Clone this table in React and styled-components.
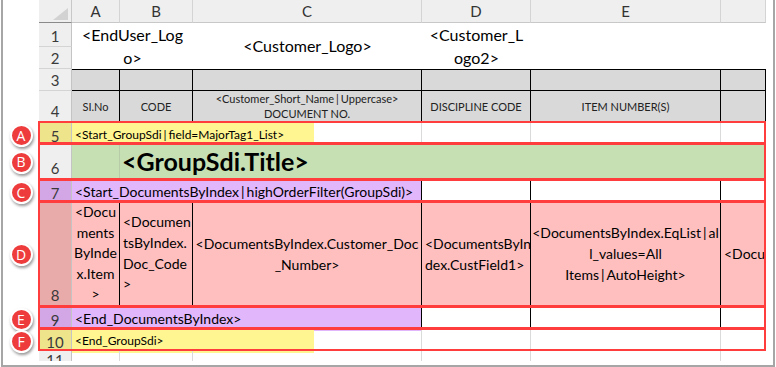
import React from "react";
import styled, { createGlobalStyle, css } from "styled-components";

const GlobalStyle = createGlobalStyle`
  html, body {
    margin: 0;
    padding: 0;
    background: #fff;
  }
  body {
    font-family: Lato, "Liberation Sans", sans-serif;
    color: #000;
  }
`;

const COLS = "36px 33px 48px 73px 229px 109px 190px 45px 7px";
const LIGHT = "#dadada";
const BLACK = "#000";
const GRAY = "#d9d9d9";
const HEAD = "#efefef";
const YELLOW = "#fff591";
const YELLOW_HEAD = "#eee48c";
const PURPLE = "#e2b6fb";
const PURPLE_HEAD = "#d3a7e6";
const PINK = "#ffbfbf";
const PINK_HEAD = "#e9aaaa";
const GREEN = "#c6e0b4";

const Frame = styled.div`
  position: relative;
  box-sizing: border-box;
  width: 774px;
  height: 367px;
  margin-left: 1px;
  border: 2px solid #a6a6a6;
  border-top: none;
  background: #fff;
  overflow: hidden;
`;

const Sheet = styled.div`
  height: 361px;
  overflow: hidden;
`;

const Row = styled.div`
  position: relative;
  display: grid;
  grid-template-columns: ${COLS};
  height: ${(p) => p.$h}px;
  ${(p) =>
    p.$boxed &&
    css`
      &::after {
        content: "";
        position: absolute;
        left: 35px;
        right: 7px;
        top: -1px;
        bottom: -2px;
        border: 2px solid #ff3d3d;
        pointer-events: none;
        z-index: 2;
      }
    `}
`;

const Gutter = styled.div`
  display: flex;
  align-items: center;
  justify-content: center;
  padding-top: 2px;
`;

const Badge = styled.div`
  box-sizing: border-box;
  width: 23px;
  height: 23px;
  border-radius: 50%;
  background: #ee3c3c;
  border: 2px solid #fff;
  box-shadow: 1px 2px 3px rgba(0, 0, 0, 0.4);
  color: #fff;
  font-family: "Open Sans", "Liberation Sans", sans-serif;
  font-size: 14px;
  line-height: 1;
  display: flex;
  align-items: center;
  justify-content: center;
`;

const Corner = styled.div`
  background: ${HEAD};
  border-right: 1px solid #c8c8c8;
  border-bottom: 1px solid #8a8a8a;
  display: flex;
  align-items: flex-end;
  justify-content: flex-end;
  padding: 0 3px 2px 0;
`;

const ColHead = styled.div`
  box-sizing: border-box;
  background: ${HEAD};
  border-right: 1px solid #d4d4d4;
  border-bottom: 1px solid #c8c8c8;
  color: #333;
  font-size: 15px;
  display: flex;
  align-items: center;
  justify-content: center;
`;

const HeadStack = styled.div`
  display: flex;
  flex-direction: column;
`;

const RowHead = styled.div`
  box-sizing: border-box;
  height: ${(p) => (p.$h ? `${p.$h}px` : "auto")};
  background: ${(p) => p.$bg || HEAD};
  border-right: 1px solid #c4c4c4;
  border-bottom: 1px solid #d4d4d4;
  color: #3a3a3a;
  font-size: 15px;
  line-height: 18px;
  display: flex;
  align-items: flex-end;
  justify-content: center;
  padding-bottom: 1px;
`;

const Cell = styled.div`
  box-sizing: border-box;
  grid-column: span ${(p) => p.$span || 1};
  min-width: 0;
  background: ${(p) => p.$bg || "transparent"};
  border-right: ${(p) => (p.$line ? `1px solid ${p.$line}` : "none")};
  border-top: ${(p) => (p.$top ? `1px solid ${p.$top}` : "none")};
  border-bottom: ${(p) => (p.$bottom ? `1px solid ${p.$bottom}` : "none")};
  display: flex;
  align-items: center;
  justify-content: ${(p) => (p.$center ? "center" : "flex-start")};
  text-align: ${(p) => (p.$center ? "center" : "left")};
  font-size: ${(p) => p.$size || 14}px;
  line-height: ${(p) => p.$lh || 20}px;
  white-space: nowrap;
  padding: 0 ${(p) => (p.$pad ?? 3)}px;
  overflow: ${(p) => (p.$clip ? "hidden" : "visible")};
`;

const Fill = styled.div`
  width: ${(p) => p.$w}px;
  height: 100%;
  background: ${(p) => p.$bg};
  display: flex;
  align-items: center;
  padding-left: 3px;
  font-size: 12px;
`;

const Text = styled.span`
  display: block;
`;

const Title = styled.span`
  font-size: 25px;
  font-weight: 700;
`;

const HeadLabel = styled.span`
  display: block;
  font-size: 11px;
  line-height: 15px;
  color: #222;
`;

const Pipe = styled.span`
  margin: 0 2px;
`;

// Calibri draws the pipe with side bearings; widen it a little
const piped = (t) =>
  t.split("|").map((part, i) => (
    <React.Fragment key={i}>
      {i > 0 && <Pipe>|</Pipe>}
      {part}
    </React.Fragment>
  ));

const lines = (arr) =>
  arr.map((t, i) => (
    <React.Fragment key={i}>
      {i > 0 && <br />}
      {piped(t)}
    </React.Fragment>
  ));

const GrayRow = ({ h, num, labels, top }) => (
  <Row $h={h}>
    <Gutter />
    <RowHead>{num}</RowHead>
    {labels.map((l, i) => (
      <Cell
        key={i}
        $bg={GRAY}
        $line={BLACK}
        $top={top ? BLACK : undefined}
        $bottom={BLACK}
        $center
      >
        {l && <HeadLabel>{lines(l)}</HeadLabel>}
      </Cell>
    ))}
    <div />
  </Row>
);

const TagRow = ({ badge, num, text, small }) => (
  <Row $h={small ? 21 : 22} $boxed>
    <Gutter>
      <Badge>{badge}</Badge>
    </Gutter>
    <RowHead $bg={small ? YELLOW_HEAD : PURPLE_HEAD}>{num}</RowHead>
    {small ? (
      <Cell $span={3} $pad={0} $line={LIGHT}>
        <Fill $w={239} $bg={YELLOW}>
          <Text>{piped(text)}</Text>
        </Fill>
      </Cell>
    ) : (
      <Cell $span={3} $bg={PURPLE} $line={BLACK}>
        <Text>{piped(text)}</Text>
      </Cell>
    )}
    <Cell $line={small ? LIGHT : BLACK} />
    <Cell $line={small ? LIGHT : BLACK} />
    <Cell />
    <div />
  </Row>
);

const Multi = ({ items, ...rest }) => (
  <Cell {...rest}>
    <Text>{lines(items)}</Text>
  </Cell>
);

export default function App() {
  return (
    <>
      <GlobalStyle />
      <Frame>
        <Sheet>
          <Row $h={23}>
            <Gutter />
            <Corner>
              <svg width="15" height="12" viewBox="0 0 15 12">
                <polygon points="15,0 15,12 0,12" fill="#d2d2d2" />
              </svg>
            </Corner>
            {["A", "B", "C", "D", "E", ""].map((l, i) => (
              <ColHead key={i}>{l}</ColHead>
            ))}
            <div />
          </Row>

          <Row $h={46}>
            <Gutter />
            <HeadStack>
              <RowHead $h={24}>1</RowHead>
              <RowHead $h={22}>2</RowHead>
            </HeadStack>
            <Multi $span={2} $center $size={16} $lh={23} items={["<EndUser_Log", "o>"]} />
            <Multi $center $size={16} items={["<Customer_Logo>"]} />
            <Multi $center $size={16} $lh={23} items={["<Customer_L", "ogo2>"]} />
            <Cell />
            <Cell />
            <div />
          </Row>

          <GrayRow h={22} num="3" top labels={[null, null, null, null, null, null]} />
          <GrayRow
            h={31}
            num="4"
            labels={[
              ["SI.No"],
              ["CODE"],
              ["<Customer_Short_Name|Uppercase>", "DOCUMENT NO."],
              ["DISCIPLINE CODE"],
              ["ITEM NUMBER(S)"],
              null,
            ]}
          />

          <TagRow badge="A" num="5" small text="<Start_GroupSdi|field=MajorTag1_List>" />

          <Row $h={36} $boxed>
            <Gutter>
              <Badge>B</Badge>
            </Gutter>
            <RowHead>6</RowHead>
            <Cell $bg={GREEN} $line="#b7cba8" />
            <Cell $span={5} $bg={GREEN} $pad={2}>
              <Title>{"<GroupSdi.Title>"}</Title>
            </Cell>
            <div />
          </Row>

          <TagRow badge="C" num="7" text="<Start_DocumentsByIndex|highOrderFilter(GroupSdi)>" />

          <Row $h={105} $boxed>
            <Gutter>
              <Badge>D</Badge>
            </Gutter>
            <RowHead $bg={PINK_HEAD}>8</RowHead>
            <Multi
              $bg={PINK}
              $line={BLACK}
              $center
              $lh={20.4}
              $pad={0}
              items={["<Docu", "ments", "ByInde", "x.Item", ">"]}
            />
            <Multi
              $bg={PINK}
              $line={BLACK}
              $lh={20.6}
              items={["<Documen", "tsByIndex.", "Doc_Code", ">"]}
            />
            <Multi
              $bg={PINK}
              $line={BLACK}
              $center
              $lh={21}
              items={["<DocumentsByIndex.Customer_Doc", "_Number>"]}
            />
            <Multi $bg={PINK} $line={BLACK} $lh={21} items={["<DocumentsByIn", "dex.CustField1>"]} />
            <Multi
              $bg={PINK}
              $line={BLACK}
              $center
              $lh={21}
              items={["<DocumentsByIndex.EqList|al", "l_values=All", "Items|AutoHeight>"]}
            />
            <Multi $bg={PINK} $clip items={["<Docu"]} />
            <div />
          </Row>

          <TagRow badge="E" num="9" text="<End_DocumentsByIndex>" />
          <TagRow badge="F" num="10" small text="<End_GroupSdi>" />

          <Row $h={22}>
            <Gutter />
            <RowHead>11</RowHead>
            <Cell $line={LIGHT} />
            <Cell $line={LIGHT} />
            <Cell $line={LIGHT} />
            <Cell $line={LIGHT} />
            <Cell $line={LIGHT} />
            <Cell />
            <div />
          </Row>
        </Sheet>
      </Frame>
    </>
  );
}
